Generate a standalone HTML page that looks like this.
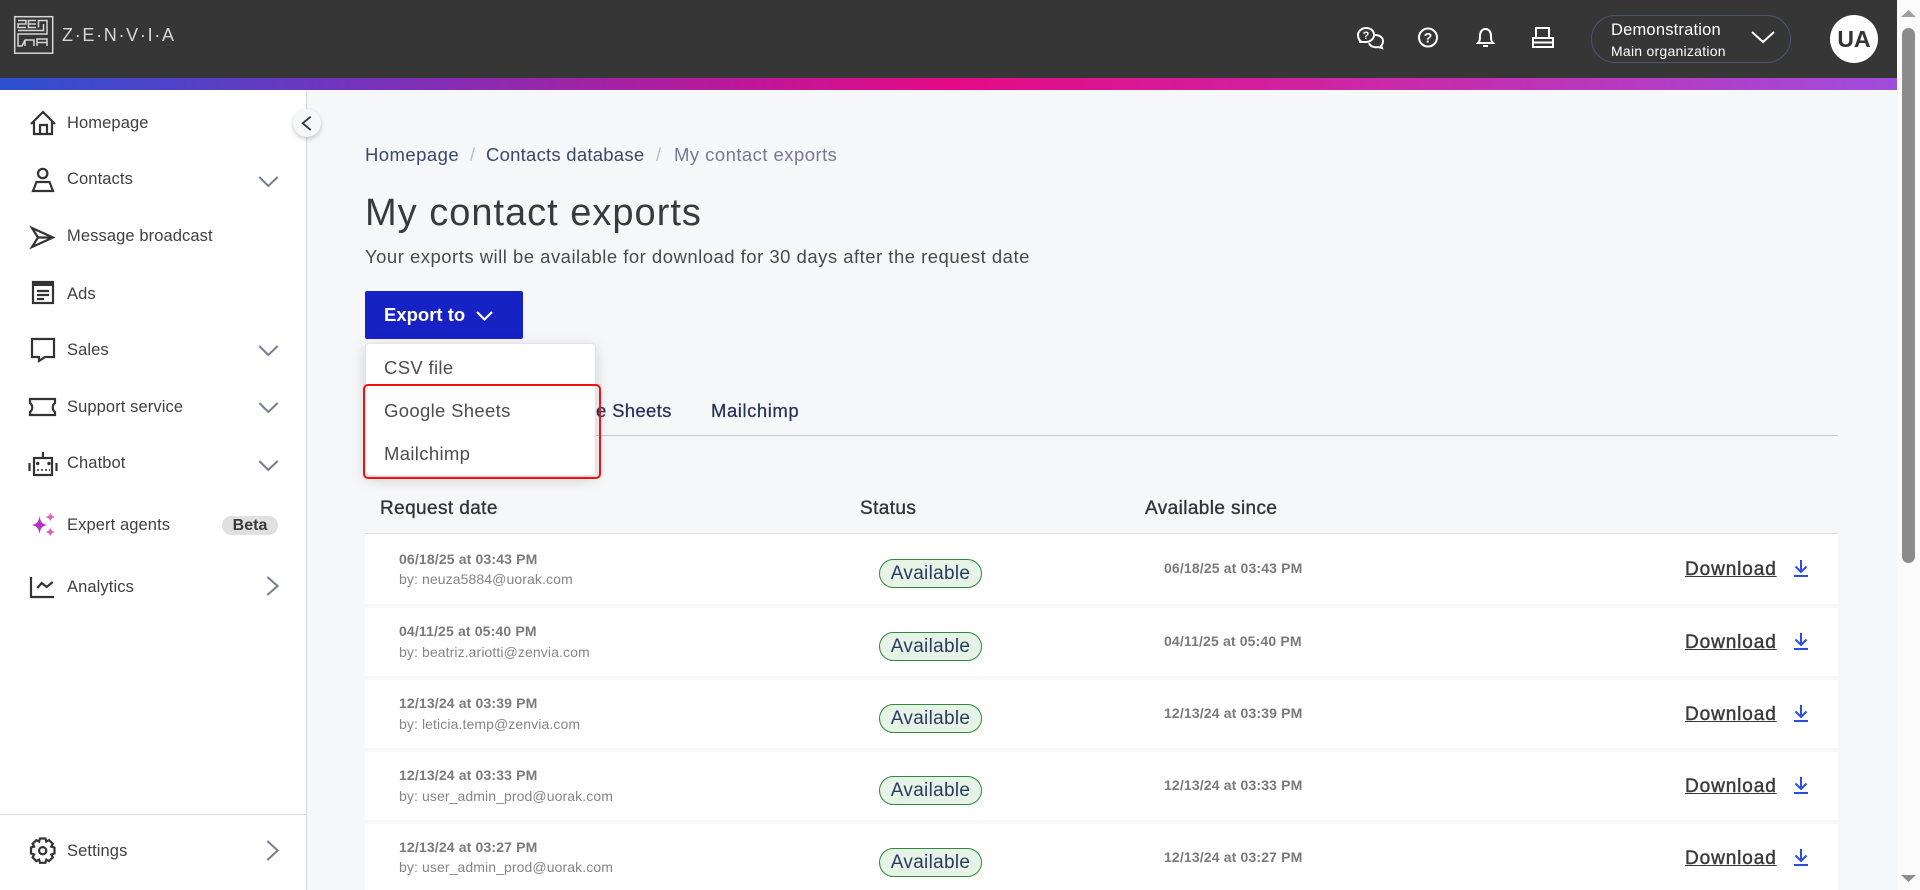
<!DOCTYPE html>
<html><head><meta charset="utf-8"><title>My contact exports</title>
<style>
html,body{margin:0;padding:0;width:1920px;height:890px;overflow:hidden;background:#f6f7f9}
body{position:relative;font-family:"Liberation Sans",sans-serif;color:#3d3d3d}
div,span.t,a.t{position:absolute}
.t{position:absolute;white-space:nowrap;line-height:20px;height:20px}
.n{left:67px;font-size:16.5px;letter-spacing:.1px;color:#3f3f3f}
.row{position:absolute;left:365px;width:1473px;background:#fff}
.d{left:399px;font-size:14px;font-weight:bold;color:#7a7a7a;letter-spacing:.15px}
.b{left:399px;font-size:14px;color:#858585;letter-spacing:.1px}
.a{left:1164px;font-size:14px;font-weight:bold;color:#7a7a7a;letter-spacing:.15px}
.p{position:absolute;left:879px;width:101px;height:27px;border:1px solid #2c8a3c;background:#e6f3e6;border-radius:15px;text-align:center;line-height:27px;font-size:19px;letter-spacing:.3px;color:#2b3a60}
.dl{left:1685px;font-size:19px;letter-spacing:.9px;color:#3a3a3a;text-decoration:underline;-webkit-text-stroke:.45px #3a3a3a}
.h{font-size:19px;letter-spacing:.4px;color:#333;-webkit-text-stroke:.35px #333}
.m{left:384px;font-size:18.5px;letter-spacing:.33px;color:#4d4d4d}
</style></head><body>
<div style="left:0;top:0;width:1897px;height:78px;background:#363636"></div>
<div style="left:0;top:78px;width:1897px;height:12px;background:linear-gradient(90deg,#2c50d0 0,#6a38c0 300px,#e40a85 952px,#c92aa8 1400px,#a04ddc 1897px)"></div>
<div style="left:0;top:90px;width:306px;height:800px;background:#fff;border-right:1px solid #d8d8de"></div>
<div style="left:0;top:814px;width:306px;height:1px;background:#d8d8e2"></div>
<div style="left:1897px;top:0;width:23px;height:890px;background:#fbfbfb"></div>
<div style="left:1902px;top:28px;width:13px;height:535px;border-radius:7px;background:#8c8c8c"></div>

<span class="t" style="left:62px;top:25px;font-size:18px;letter-spacing:1.7px;color:#d8d8d8">Z·E·N·V·I·A</span>
<span class="t" style="left:1611px;top:20px;font-size:16.5px;letter-spacing:.2px;color:#fff">Demonstration</span>
<span class="t" style="left:1611px;top:41px;font-size:14px;letter-spacing:.25px;color:#fff">Main organization</span>
<div style="left:1591px;top:15px;width:198px;height:46px;border:1px solid #4c5572;border-radius:24px"></div>
<div style="left:1830px;top:15px;width:48px;height:48px;border-radius:50%;background:#fff;text-align:center;line-height:48px;font-size:23px;font-weight:bold;color:#333">UA</div>

<span class="t n" style="top:113px">Homepage</span>
<span class="t n" style="top:169px">Contacts</span>
<span class="t n" style="top:226px">Message broadcast</span>
<span class="t n" style="top:284px">Ads</span>
<span class="t n" style="top:340px">Sales</span>
<span class="t n" style="top:397px">Support service</span>
<span class="t n" style="top:453px">Chatbot</span>
<span class="t n" style="top:515px">Expert agents</span>
<div style="left:222px;top:516px;width:56px;height:19px;border-radius:10px;background:#e0e0e0;text-align:center;line-height:19px;font-size:16px;font-weight:bold;color:#3a3a3a">Beta</div>
<span class="t n" style="top:577px">Analytics</span>
<span class="t n" style="top:841px">Settings</span>
<div style="left:293px;top:109px;width:28px;height:28px;border-radius:50%;background:#f6f7f9;box-shadow:0 2px 5px rgba(0,0,0,.22)"></div>

<span class="t" style="left:365px;top:145px;font-size:18.5px;letter-spacing:.45px;color:#3b4869">Homepage</span>
<span class="t" style="left:470px;top:145px;font-size:18px;color:#b9bdc9">/</span>
<span class="t" style="left:486px;top:145px;font-size:18.5px;letter-spacing:.24px;color:#3b4869">Contacts database</span>
<span class="t" style="left:656px;top:145px;font-size:18px;color:#b9bdc9">/</span>
<span class="t" style="left:674px;top:145px;font-size:18.5px;letter-spacing:.45px;color:#747a92">My contact exports</span>
<span class="t" style="left:365px;top:193px;font-size:38px;letter-spacing:1px;line-height:40px;height:40px;color:#3a3a3a">My contact exports</span>
<span class="t" style="left:365px;top:247px;font-size:18.5px;letter-spacing:.49px;color:#4a4a4a">Your exports will be available for download for 30 days after the request date</span>

<div style="left:365px;top:291px;width:158px;height:48px;background:#1722c4;border-radius:2px"></div>
<span class="t" style="left:384px;top:305px;font-size:18.5px;font-weight:bold;color:#fff">Export to</span>

<span class="t" style="left:545px;top:401px;font-size:18.5px;letter-spacing:.33px;color:#27325a;-webkit-text-stroke:.25px #27325a">Google Sheets</span>
<span class="t" style="left:711px;top:401px;font-size:18.5px;letter-spacing:.55px;color:#27325a;-webkit-text-stroke:.25px #27325a">Mailchimp</span>
<div style="left:365px;top:435px;width:1473px;height:1px;background:#c4c7d4"></div>

<span class="t h" style="left:380px;top:499px">Request date</span>
<span class="t h" style="left:860px;top:499px">Status</span>
<span class="t h" style="left:1145px;top:499px">Available since</span>
<div style="left:365px;top:533px;width:1473px;height:1px;background:#dcdde3"></div>

<div class="row" style="top:534px;height:70px"></div>
<div class="row" style="top:608px;height:68px"></div>
<div class="row" style="top:680px;height:68px"></div>
<div class="row" style="top:752px;height:68px"></div>
<div class="row" style="top:824px;height:66px"></div>

<span class="t d" style="top:549px">06/18/25 at 03:43 PM</span><span class="t b" style="top:569px">by: neuza5884@uorak.com</span>
<div class="p" style="top:559px">Available</div><span class="t a" style="top:558px">06/18/25 at 03:43 PM</span><a class="t dl" style="top:560px">Download</a>

<span class="t d" style="top:621px">04/11/25 at 05:40 PM</span><span class="t b" style="top:642px">by: beatriz.ariotti@zenvia.com</span>
<div class="p" style="top:632px">Available</div><span class="t a" style="top:631px">04/11/25 at 05:40 PM</span><a class="t dl" style="top:633px">Download</a>

<span class="t d" style="top:693px">12/13/24 at 03:39 PM</span><span class="t b" style="top:714px">by: leticia.temp@zenvia.com</span>
<div class="p" style="top:704px">Available</div><span class="t a" style="top:703px">12/13/24 at 03:39 PM</span><a class="t dl" style="top:705px">Download</a>

<span class="t d" style="top:765px">12/13/24 at 03:33 PM</span><span class="t b" style="top:786px">by: user_admin_prod@uorak.com</span>
<div class="p" style="top:776px">Available</div><span class="t a" style="top:775px">12/13/24 at 03:33 PM</span><a class="t dl" style="top:777px">Download</a>

<span class="t d" style="top:837px">12/13/24 at 03:27 PM</span><span class="t b" style="top:857px">by: user_admin_prod@uorak.com</span>
<div class="p" style="top:848px">Available</div><span class="t a" style="top:847px">12/13/24 at 03:27 PM</span><a class="t dl" style="top:849px">Download</a>

<svg width="1920" height="890" viewBox="0 0 1920 890" style="position:absolute;left:0;top:0" fill="none" stroke-linejoin="miter">
<!-- logo -->
<g stroke="#d6d6d6" stroke-width="1.5">
<rect x="14.7" y="16.7" width="38" height="36.5"/>
<path d="M18 20.5H26V24H18V27.5H26M36 20.5H28.5V27.5H36M28.5 24H36M38.5 27.5V20.5H47V34H18V46H22L25 40H34V46M18 30.5H43.5V24M25 46V40M37 46V39H47V46M37 42.5H47"/>
</g>
<!-- header icons -->
<g stroke="#fff" stroke-width="2">
<path d="M1362 42C1358 40 1358 36 1358 35C1358 31 1362 28 1366 28C1371 28 1374 31 1374 35C1374 39 1370 42 1366 42H1359"/>
<path d="M1375 35C1380 35 1383 38 1383 41C1383 43 1382 45 1381 46L1382 48L1378 47C1374 48 1370 46 1369 43"/>
<circle cx="1428" cy="37.5" r="9"/>
<path d="M1478 43C1480 41 1480 39 1480 36C1480 32 1482 29 1485.5 29C1489 29 1491 32 1491 36C1491 39 1491 41 1493 43ZM1483 46H1488"/>
<path d="M1536 37V28H1549V37M1533 38H1553V47H1533ZM1533 42.5H1553"/>
</g>
<text x="1366" y="39" font-family="Liberation Sans" font-size="11" font-weight="bold" fill="#fff" text-anchor="middle">?</text>
<text x="1428" y="42.5" font-family="Liberation Sans" font-size="14" font-weight="bold" fill="#fff" text-anchor="middle">?</text>
<path d="M1752 32L1763 42L1774 32" stroke="#fff" stroke-width="2"/>
<!-- sidebar icons -->
<g stroke="#333" stroke-width="2.2">
<path d="M31 124L43 112L55 124M34 122V134H52V122M40 134V125H47V134"/>
<circle cx="42.7" cy="173.5" r="4.7"/>
<path d="M33 191L36.5 182H49.5L53 191Z"/>
<path d="M32 228L53 237.5L32 247L38 237.5ZM38 237.5H53"/>
<rect x="33" y="282" width="20" height="21"/>
<path d="M37 291H49M37 295H49M37 299H44"/>
<path d="M32 339H54V357H45L39 361V357H32Z"/>
<path d="M30 399H55V403C52 405 52 410 55 412V415H30V412C33 410 33 405 30 403Z"/>
<rect x="34" y="458" width="18" height="17"/>
<path d="M43 452V458M29.5 463V471M56.5 463V471"/>
<path d="M37 470H50" stroke-width="1.5" stroke-dasharray="2 2"/>
<path d="M31 577V597H54M37.3 588L41.7 583L46.7 587L52.7 582"/>
<circle cx="42.7" cy="850.7" r="3.6"/>
<path d="M40 838.5H45.400L46.300 841.600L49 840.100L52.800 843.800L51.300 846.600L54.500 847.600V853.500L51.300 854.500L52.800 857.400L49 861.100L46.300 859.600L45.400 862.800H40L39.100 859.600L36.400 861.100L32.600 857.400L34.100 854.500L31 853.500V847.600L34.100 846.600L32.600 843.800L36.400 840.100L39.100 841.600Z"/>
</g>
<rect x="33" y="281" width="20" height="5" fill="#333"/>
<circle cx="37.7" cy="463.5" r="1.7" fill="#333"/>
<circle cx="49" cy="463.5" r="1.7" fill="#333"/>
<path d="M39.5 516C40.5 522 42 524 47.5 525C42 526 40.5 528 39.5 534C38.5 528 37 526 31.5 525C37 524 38.5 522 39.5 516Z" fill="#b730c8"/>
<path d="M50.3 513L51.8 515.5L54.5 517L51.8 518.5L50.3 521L48.8 518.5L46 517L48.8 515.5Z" fill="#e060b8"/>
<path d="M50.3 528L51.8 530.5L54.5 532L51.8 533.5L50.3 536L48.8 533.5L46 532L48.8 530.5Z" fill="#e060b8"/>
<g stroke="#777f8f" stroke-width="2">
<path d="M259.3 177L268.3 186L277.7 177"/>
<path d="M259.3 346L268.3 355L277.7 346"/>
<path d="M259.3 403L268.3 412L277.7 403"/>
<path d="M259.3 461L268.3 470L277.7 461"/>
<path d="M267.3 577L277.7 586L267.3 595"/>
<path d="M267.3 841L277.7 850.5L267.3 860"/>
</g>
<path d="M310.7 116.7L302.7 123.3L310.7 130" stroke="#333" stroke-width="1.8"/>
<path d="M477 312L484.5 319.5L492 312" stroke="#fff" stroke-width="2.2"/>
<!-- download arrows -->
<g stroke="#2c4de0" stroke-width="2">
<path d="M1801 560V572M1795.5 566.5L1801 572L1806.5 566.5M1794 576H1808"/>
<path d="M1801 633V645M1795.5 639.5L1801 645L1806.5 639.5M1794 649H1808"/>
<path d="M1801 705V717M1795.5 711.5L1801 717L1806.5 711.5M1794 721H1808"/>
<path d="M1801 777V789M1795.5 783.5L1801 789L1806.5 783.5M1794 793H1808"/>
<path d="M1801 849V861M1795.5 855.5L1801 861L1806.5 855.5M1794 865H1808"/>
</g>
<path d="M1901 17H1916L1908.5 10Z" fill="#a0a0a0"/>
<path d="M1901 875H1916L1908.5 882Z" fill="#8c8c8c"/>
</svg>

<div style="left:365px;top:343px;width:231px;height:133px;background:#fff;border:1px solid #e4e4e8;box-sizing:border-box;border-radius:4px;box-shadow:0 4px 14px rgba(0,0,0,.16);z-index:10"></div>
<span class="t m" style="top:358px;z-index:11">CSV file</span>
<span class="t m" style="top:401px;z-index:11">Google Sheets</span>
<span class="t m" style="top:444px;z-index:11">Mailchimp</span>
<div style="left:363px;top:384px;width:234px;height:91px;border:2px solid #f01010;border-radius:5px;z-index:12"></div>
</body></html>
